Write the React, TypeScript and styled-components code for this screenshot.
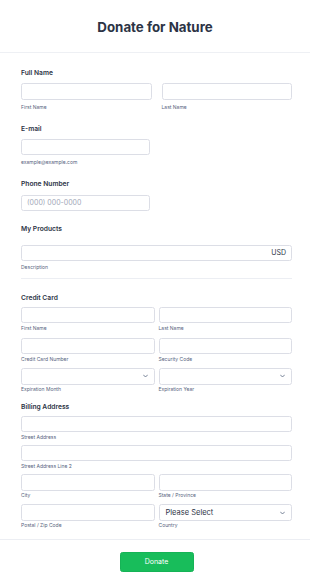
import React from "react";
import styled, { createGlobalStyle } from "styled-components";

const Global = createGlobalStyle`
  html, body { margin: 0; padding: 0; background: #ffffff; }
  body { font-family: Inter, "Noto Sans", "Liberation Sans", sans-serif; color: #2c3345; }
  * { box-sizing: border-box; }
`;

const Page = styled.div`
  width: 310px;
  min-height: 587px;
  background: #fff;
`;

const Header = styled.header`
  height: 53px;
  display: flex;
  align-items: center;
  justify-content: center;
  border-bottom: 1.5px solid #eef0f4;
`;

const Title = styled.h1`
  margin: 0;
  padding-top: 1px;
  font-size: 13.3px;
  font-weight: 700;
  color: #2c3345;
  letter-spacing: 0;
`;

const Content = styled.div`
  padding: 15px 18px 0 21px;
  display: flex;
  flex-direction: column;
`;

const Field = styled.div<{ $mt?: number }>`
  display: flex;
  flex-direction: column;
  margin-top: ${(p) => p.$mt ?? 0}px;
`;

const Label = styled.div<{ $gap: number }>`
  font-size: 6.7px;
  line-height: 10px;
  font-weight: 600;
  color: #2c3345;
  margin-bottom: ${(p) => p.$gap}px;
`;

const Row = styled.div<{ $gap: number; $mt?: number }>`
  display: grid;
  grid-template-columns: 1fr 1fr;
  column-gap: ${(p) => p.$gap}px;
  margin-top: ${(p) => p.$mt ?? 0}px;
`;

const Cell = styled.div`
  display: flex;
  flex-direction: column;
  min-width: 0;
`;

const Input = styled.div<{ $w?: number; $h?: number }>`
  width: ${(p) => (p.$w ? `${p.$w}px` : "100%")};
  height: ${(p) => p.$h ?? 16.5}px;
  border: 1px solid #dcdee6;
  border-radius: 2.5px;
  background: #fff;
  display: flex;
  align-items: center;
  padding: 0 5px;
  font-size: 7px;
  color: #2c3345;
`;

const Placeholder = styled.span`
  color: #a3a8b8;
  font-size: 7px;
`;

const Suffix = styled.span`
  margin-left: auto;
  font-size: 7px;
  color: #2c3345;
`;

const SelectBox = styled(Input)`
  justify-content: space-between;
  padding: 0 6px 0 6px;
`;

const SelectText = styled.span`
  font-size: 7.5px;
  color: #2c3345;
`;

const Chevron = () => (
  <svg width="5" height="4" viewBox="0 0 10 6" style={{ marginLeft: "auto" }}>
    <path d="M1 1l4 4 4-4" fill="none" stroke="#57647e" strokeWidth="1.6" strokeLinecap="round" strokeLinejoin="round" />
  </svg>
);

const Sub = styled.div<{ $mt: number }>`
  font-size: 5px;
  line-height: 7px;
  color: #57647e;
  margin-top: ${(p) => p.$mt}px;
  white-space: nowrap;
`;

const Divider = styled.div<{ $mt: number }>`
  height: 1px;
  background: #eceef3;
  margin-top: ${(p) => p.$mt}px;
`;

const Footer = styled.footer`
  margin-top: 10px;
  border-top: 1px solid #eceef3;
  padding-top: 12px;
  display: flex;
  justify-content: center;
  padding-left: 3px;
`;

const Button = styled.button`
  width: 74px;
  height: 20px;
  border: 1px solid #16b356;
  border-radius: 2.5px;
  background: #18bd5b;
  color: #fff;
  font-family: Inter, "Noto Sans", sans-serif;
  font-size: 7px;
  font-weight: 400;
  padding: 0;
  cursor: pointer;
`;

type Pair = { a: string; b: string; select?: boolean; bText?: string };

const CardRow: React.FC<Pair & { mt?: number; gap: number; subMt: number }> = ({ a, b, select, bText, mt, gap, subMt }) => (
  <Row $gap={gap} $mt={mt}>
    <Cell>
      {select && !bText ? (
        <SelectBox>
          <Chevron />
        </SelectBox>
      ) : (
        <Input />
      )}
      <Sub $mt={subMt}>{a}</Sub>
    </Cell>
    <Cell>
      {select ? (
        <SelectBox>
          {bText && <SelectText>{bText}</SelectText>}
          <Chevron />
        </SelectBox>
      ) : (
        <Input />
      )}
      <Sub $mt={subMt}>{b}</Sub>
    </Cell>
  </Row>
);

export default function App() {
  return (
    <Page>
      <Global />
      <Header>
        <Title>Donate for Nature</Title>
      </Header>
      <Content>
        <Field>
          <Label $gap={5}>Full Name</Label>
          <CardRow a="First Name" b="Last Name" gap={10} subMt={4} />
        </Field>

        <Field $mt={13.5}>
          <Label $gap={5}>E-mail</Label>
          <Input $w={129} $h={16} />
          <Sub $mt={3.5}>example@example.com</Sub>
        </Field>

        <Field $mt={13.5}>
          <Label $gap={5.5}>Phone Number</Label>
          <Input $w={129} $h={16}>
            <Placeholder>(000) 000-0000</Placeholder>
          </Input>
        </Field>

        <Field $mt={13.5}>
          <Label $gap={10.5}>My Products</Label>
          <Input $h={16}>
            <Suffix>USD</Suffix>
          </Input>
          <Sub $mt={3.5}>Description</Sub>
          <Divider $mt={7} />
        </Field>

        <Field $mt={14}>
          <Label $gap={3.7}>Credit Card</Label>
          <CardRow a="First Name" b="Last Name" gap={4} subMt={1.5} />
          <CardRow a="Credit Card Number" b="Security Code" gap={4} subMt={1.7} mt={6} />
          <CardRow a="Expiration Month" b="Expiration Year" gap={4} subMt={1.8} mt={5.2} select />
        </Field>

        <Field $mt={8.5}>
          <Label $gap={4.3}>Billing Address</Label>
          <Input $h={16} />
          <Sub $mt={1.5}>Street Address</Sub>
          <Field $mt={4.5}>
            <Input $h={16} />
            <Sub $mt={1.5}>Street Address Line 2</Sub>
          </Field>
          <CardRow a="City" b="State / Province" gap={4} subMt={1.8} mt={4.5} />
          <CardRow a="Postal / Zip Code" b="Country" gap={4} subMt={1} mt={4.8} select bText="Please Select" />
        </Field>
      </Content>
      <Footer>
        <Button>Donate</Button>
      </Footer>
    </Page>
  );
}
